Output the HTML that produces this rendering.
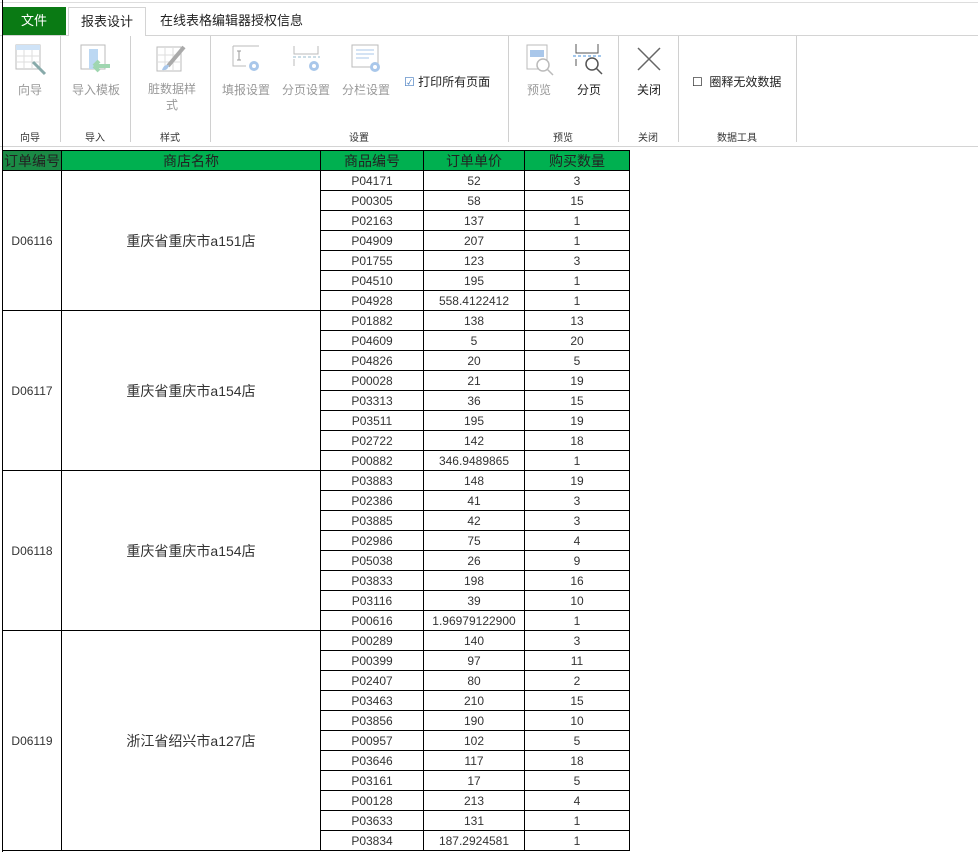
<!DOCTYPE html>
<html><head><meta charset="utf-8"><style>
*{margin:0;padding:0;box-sizing:border-box}
body{width:978px;height:852px;overflow:hidden;background:#fff;font-family:"Liberation Sans","Noto Sans CJK SC",sans-serif;position:relative;color:#222}
.a{position:absolute}
.lbl{position:absolute;font-size:12px;color:#999;text-align:center;white-space:nowrap}
.glbl{position:absolute;font-size:10px;color:#333;text-align:center;top:129px}
.sep{position:absolute;top:36px;height:106px;width:1px;background:#d0d0d0}
table{position:absolute;left:2px;top:150px;border-collapse:collapse;table-layout:fixed;font-size:12px}
td{border:1px solid #000;text-align:center;height:20px;padding:0;line-height:18px;white-space:nowrap;overflow:hidden;color:#333}
tr.h td{background:#00b050;font-size:14px;color:#222}
</style></head><body>
<div class="a" style="left:0;top:2px;width:978px;height:1px;background:#ddd"></div>
<div class="a" style="left:0;top:35px;width:978px;height:1px;background:#d4d4d4"></div>
<div class="a" style="left:2px;top:7px;width:64px;height:28px;background:#0a7a14;color:#fff;font-size:13px;text-align:center;line-height:28px">文件</div>
<div class="a" style="left:68px;top:7px;width:78px;height:29px;background:#fff;border:1px solid #d4d4d4;border-bottom:none;font-size:13px;text-align:center;line-height:27px">报表设计</div>
<div class="a" style="left:160px;top:7px;font-size:13px;line-height:27px">在线表格编辑器授权信息</div>

<div class="sep" style="left:60px"></div><div class="sep" style="left:130px"></div><div class="sep" style="left:210px"></div><div class="sep" style="left:508px"></div><div class="sep" style="left:618px"></div><div class="sep" style="left:678px"></div><div class="sep" style="left:796px"></div>
<div class="a" style="left:0;top:146px;width:978px;height:1px;background:#d4d4d4"></div>

<svg class="a" style="left:15px;top:44px" width="32" height="32"><rect x="1" y="1" width="24" height="24" fill="#fff" stroke="#bbb"/><rect x="1" y="1" width="24" height="5" fill="#cfe3f7"/><path d="M1 12H25M1 18H25M9 6V25M17 6V25" stroke="#ddd"/><path d="M18 18L30 30" stroke="#8aa" stroke-width="3"/></svg>
<svg class="a" style="left:80px;top:44px" width="32" height="32"><rect x="1" y="1" width="24" height="24" fill="#fff" stroke="#bbb"/><rect x="9" y="5" width="9" height="20" fill="#bcd8f3"/><path d="M14 22H30M14 22L19 17M14 22L19 27" stroke="#9fd6b0" stroke-width="4"/></svg>
<svg class="a" style="left:156px;top:44px" width="32" height="32"><rect x="1" y="3" width="24" height="24" fill="#fff" stroke="#bbb"/><path d="M1 11H25M1 18H25M9 3V27M17 3V27" stroke="#ddd"/><path d="M28 3L12 22" stroke="#aaa" stroke-width="4"/><path d="M6 26Q8 20 13 21Q12 27 6 26Z" fill="#a9c7ea"/></svg>
<svg class="a" style="left:232px;top:44px" width="32" height="32"><path d="M1 2H27M1 2V22H14" stroke="#bbb" fill="none"/><path d="M5 7H9M7 7V16M5 16H9" stroke="#999"/><circle cx="22" cy="22" r="5" fill="#a9c7ea"/><circle cx="22" cy="22" r="2" fill="#fff"/></svg>
<svg class="a" style="left:292px;top:44px" width="32" height="32"><path d="M2 2V10H26V2M2 22V15" stroke="#bbb" fill="none"/><path d="M1 13H28" stroke="#9bc" stroke-dasharray="3 2"/><circle cx="22" cy="22" r="5" fill="#a9c7ea"/><circle cx="22" cy="22" r="2" fill="#fff"/></svg>
<svg class="a" style="left:351px;top:44px" width="32" height="32"><rect x="1" y="1" width="26" height="22" fill="#fff" stroke="#bbb"/><path d="M5 6H23M5 10H23M5 14H18" stroke="#a9c7ea"/><circle cx="24" cy="23" r="5" fill="#a9c7ea"/><circle cx="24" cy="23" r="2" fill="#fff"/></svg>
<svg class="a" style="left:526px;top:44px" width="32" height="32"><rect x="1" y="1" width="20" height="24" fill="#fff" stroke="#bbb"/><rect x="4" y="6" width="14" height="7" fill="#a9c7ea"/><circle cx="17" cy="21" r="6" fill="#fff" stroke="#bbb" stroke-width="1.5"/><path d="M21 25L27 31" stroke="#bbb" stroke-width="1.5"/></svg>
<svg class="a" style="left:573px;top:44px" width="34" height="32"><path d="M3 0V9H25V0M3 22V15" stroke="#555" fill="none"/><path d="M0 12H28" stroke="#4a90d9" stroke-dasharray="3 2"/><circle cx="19" cy="20" r="6" fill="#fff" stroke="#555" stroke-width="1.5"/><path d="M23 24L29 30" stroke="#555" stroke-width="1.5"/></svg>
<svg class="a" style="left:637px;top:47px" width="24" height="24"><path d="M1 1L23 23M23 1L1 23" stroke="#666" stroke-width="1.5"/></svg>

<div class="lbl" style="left:0;width:60px;top:81px">向导</div>
<div class="lbl" style="left:60px;width:72px;top:81px">导入模板</div>
<div class="lbl" style="left:140px;width:64px;top:81px;line-height:16px;white-space:normal">脏数据样<br>式</div>
<div class="lbl" style="left:216px;width:60px;top:81px">填报设置</div>
<div class="lbl" style="left:276px;width:60px;top:81px">分页设置</div>
<div class="lbl" style="left:336px;width:60px;top:81px">分栏设置</div>
<div class="a" style="left:404px;top:73px;font-size:12px;color:#222"><span style="color:#4a7fc1">☑</span> 打印所有页面</div>
<div class="lbl" style="left:519px;width:40px;top:81px">预览</div>
<div class="lbl" style="left:569px;width:40px;top:81px;color:#222">分页</div>
<div class="lbl" style="left:629px;width:40px;top:81px;color:#222">关闭</div>
<div class="a" style="left:692px;top:73px;font-size:12px;color:#222">☐ &nbsp;圈释无效数据</div>
<div class="glbl" style="left:0;width:60px">向导</div>
<div class="glbl" style="left:60px;width:70px">导入</div>
<div class="glbl" style="left:130px;width:80px">样式</div>
<div class="glbl" style="left:210px;width:298px">设置</div>
<div class="glbl" style="left:508px;width:110px">预览</div>
<div class="glbl" style="left:618px;width:60px">关闭</div>
<div class="glbl" style="left:678px;width:118px">数据工具</div>

<table>
<colgroup><col style="width:59px"><col style="width:259px"><col style="width:103px"><col style="width:101px"><col style="width:105px"></colgroup>
<tr class="h"><td style="background:#1a8a45">订单编号</td><td>商店名称</td><td>商品编号</td><td>订单单价</td><td>购买数量</td></tr>
<tr><td rowspan="7">D06116</td><td rowspan="7" style="font-size:14px">重庆省重庆市a151店</td><td>P04171</td><td>52</td><td>3</td></tr>
<tr><td>P00305</td><td>58</td><td>15</td></tr>
<tr><td>P02163</td><td>137</td><td>1</td></tr>
<tr><td>P04909</td><td>207</td><td>1</td></tr>
<tr><td>P01755</td><td>123</td><td>3</td></tr>
<tr><td>P04510</td><td>195</td><td>1</td></tr>
<tr><td>P04928</td><td>558.4122412</td><td>1</td></tr>
<tr><td rowspan="8">D06117</td><td rowspan="8" style="font-size:14px">重庆省重庆市a154店</td><td>P01882</td><td>138</td><td>13</td></tr>
<tr><td>P04609</td><td>5</td><td>20</td></tr>
<tr><td>P04826</td><td>20</td><td>5</td></tr>
<tr><td>P00028</td><td>21</td><td>19</td></tr>
<tr><td>P03313</td><td>36</td><td>15</td></tr>
<tr><td>P03511</td><td>195</td><td>19</td></tr>
<tr><td>P02722</td><td>142</td><td>18</td></tr>
<tr><td>P00882</td><td>346.9489865</td><td>1</td></tr>
<tr><td rowspan="8">D06118</td><td rowspan="8" style="font-size:14px">重庆省重庆市a154店</td><td>P03883</td><td>148</td><td>19</td></tr>
<tr><td>P02386</td><td>41</td><td>3</td></tr>
<tr><td>P03885</td><td>42</td><td>3</td></tr>
<tr><td>P02986</td><td>75</td><td>4</td></tr>
<tr><td>P05038</td><td>26</td><td>9</td></tr>
<tr><td>P03833</td><td>198</td><td>16</td></tr>
<tr><td>P03116</td><td>39</td><td>10</td></tr>
<tr><td>P00616</td><td>1.96979122900</td><td>1</td></tr>
<tr><td rowspan="11">D06119</td><td rowspan="11" style="font-size:14px">浙江省绍兴市a127店</td><td>P00289</td><td>140</td><td>3</td></tr>
<tr><td>P00399</td><td>97</td><td>11</td></tr>
<tr><td>P02407</td><td>80</td><td>2</td></tr>
<tr><td>P03463</td><td>210</td><td>15</td></tr>
<tr><td>P03856</td><td>190</td><td>10</td></tr>
<tr><td>P00957</td><td>102</td><td>5</td></tr>
<tr><td>P03646</td><td>117</td><td>18</td></tr>
<tr><td>P03161</td><td>17</td><td>5</td></tr>
<tr><td>P00128</td><td>213</td><td>4</td></tr>
<tr><td>P03633</td><td>131</td><td>1</td></tr>
<tr><td>P03834</td><td>187.2924581</td><td>1</td></tr>
</table>
<div class="a" style="left:2px;top:0;width:1px;height:852px;background:#000"></div>
</body></html>
